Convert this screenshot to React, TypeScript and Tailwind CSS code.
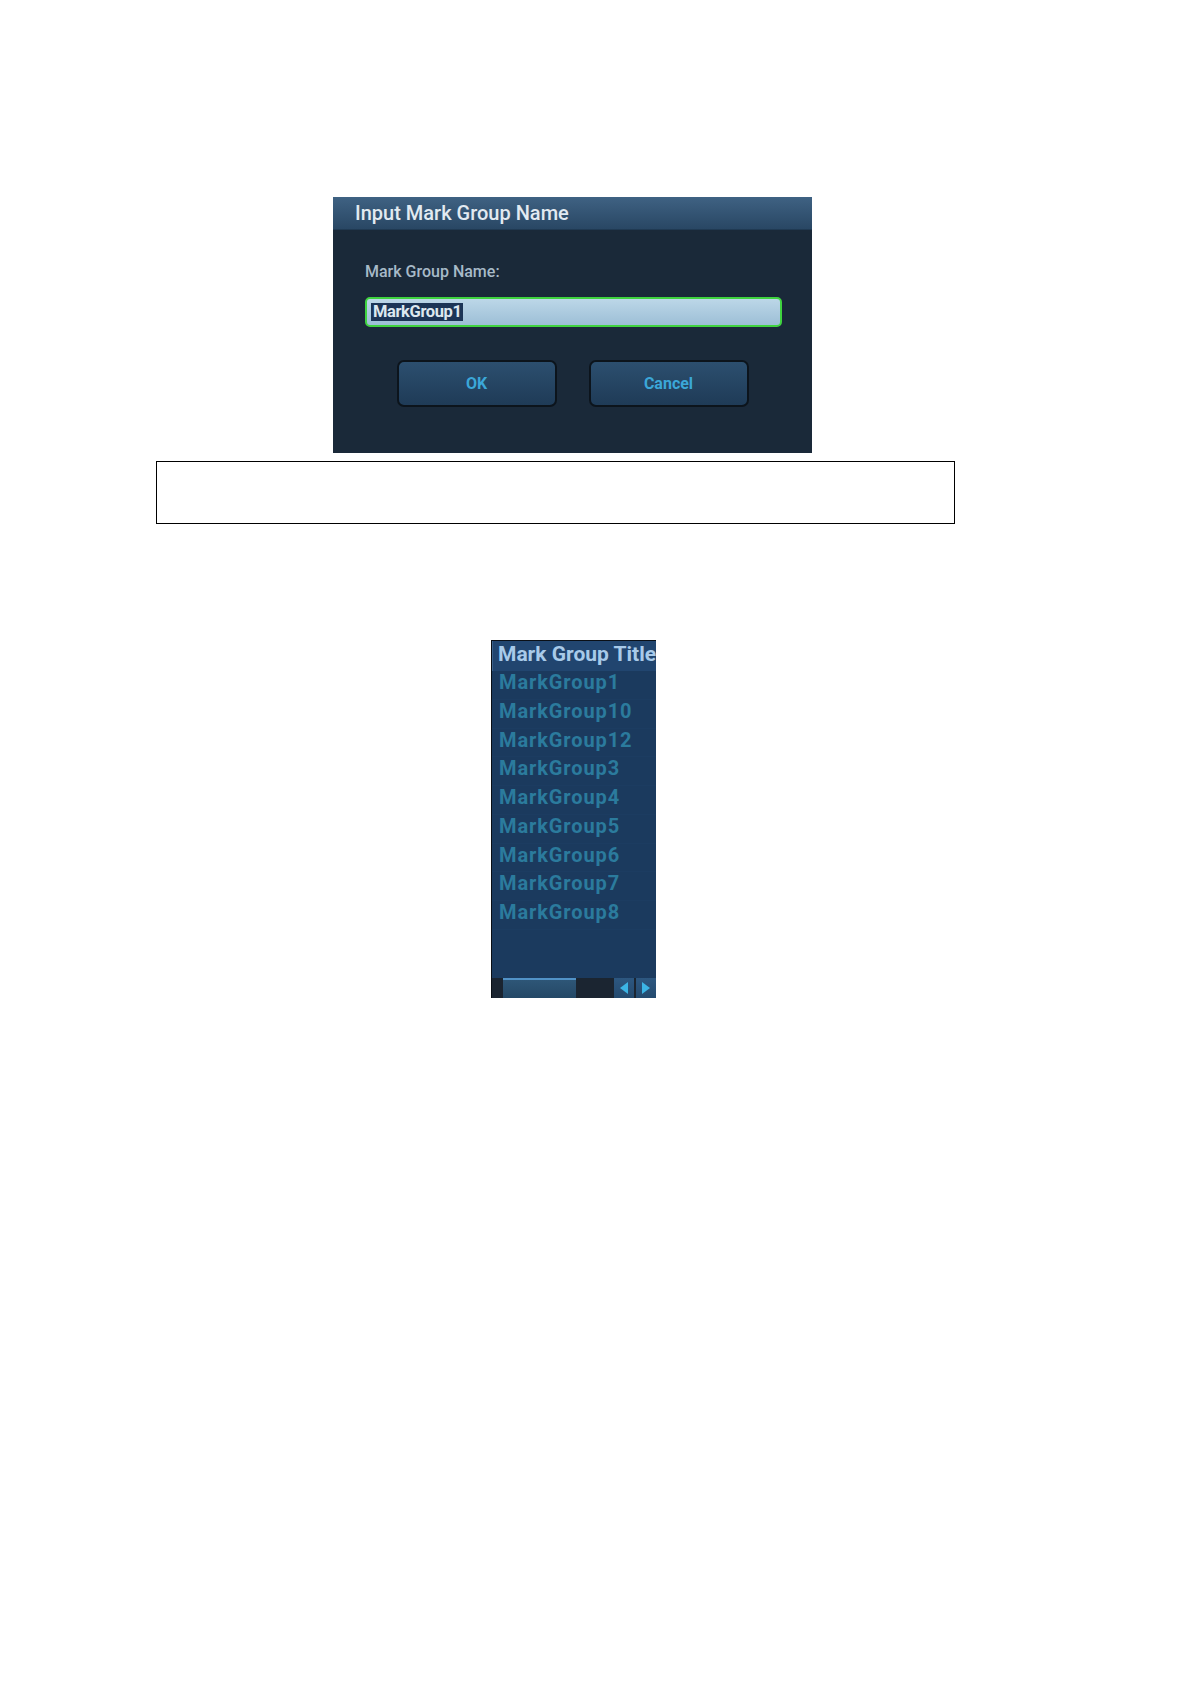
import React from 'react';

const groups = [
  'MarkGroup1',
  'MarkGroup10',
  'MarkGroup12',
  'MarkGroup3',
  'MarkGroup4',
  'MarkGroup5',
  'MarkGroup6',
  'MarkGroup7',
  'MarkGroup8',
];

function NameDialog() {
  return (
    <div className="ml-[333px] w-[479px] h-[256px] bg-[#1a2939] flex flex-col">
      <div className="h-[33px] flex items-center pl-[22px] bg-gradient-to-b from-[#3f6283] to-[#294764] border-b border-[#203a53]">
        <span className="text-[20px] leading-[20px] font-medium text-[#e2eaf1]">Input Mark Group Name</span>
      </div>

      <div className="pl-[32px] pr-[30px] pt-[32px]">
        <div className="text-[16px] leading-[20px] font-medium text-[#a7bac8]">Mark Group Name:</div>
        <div className="mt-[15px] h-[30px] rounded-[5px] border-2 border-[#3fd33f] bg-gradient-to-b from-[#bcd7e8] to-[#9dbfd6] flex items-center pl-[4px]">
          <span className="inline-block h-[18px] leading-[18px] px-[2px] bg-[#1c3556] text-[#dce8f0] text-[16.5px] font-bold tracking-[-0.4px]">
            MarkGroup1
          </span>
        </div>
      </div>

      <div className="mt-[33px] flex justify-center gap-8">
        {['OK', 'Cancel'].map((label) => (
          <button
            key={label}
            className="w-[160px] h-[47px] rounded-[7px] border-2 border-[#0c141c] bg-gradient-to-b from-[#2c4f6f] to-[#1f3b57] text-[16px] font-bold text-[#3ba7d8]"
          >
            {label}
          </button>
        ))}
      </div>
    </div>
  );
}

function GroupList() {
  return (
    <div className="ml-[491px] w-[165px] h-[358px] bg-[#1b3a5e] border-l border-t border-[#0a0f16] flex flex-col overflow-hidden">
      <div className="h-[30px] shrink-0 bg-[#21456f] border-l border-[#3b618a] pl-[5px] pt-[3px] whitespace-nowrap">
        <span className="text-[21px] leading-[20px] font-bold text-[#a8cae9]">Mark Group Title</span>
      </div>

      {groups.map((name) => (
        <div
          key={name}
          className="h-[28.75px] shrink-0 pl-[7px] border-b border-[#1c3c61] text-[20px] leading-[23px] font-bold tracking-[0.9px] text-[#2b7b9d]"
        >
          {name}
        </div>
      ))}

      <div className="flex-1" />

      {/* horizontal scrollbar */}
      <div className="h-[20px] shrink-0 flex bg-[#1a2430]">
        <div className="w-[11px]" />
        <div className="w-[73px] border-t-2 border-[#5192c7] bg-gradient-to-b from-[#2e5677] to-[#244866]" />
        <div className="w-[39px] bg-[#1b2531]" />
        <div className="w-[20px] bg-gradient-to-b from-[#2d5780] to-[#244a6e] flex items-center justify-center">
          <svg width="8" height="12" viewBox="0 0 8 12">
            <path d="M8 0 L0 6 L8 12 Z" fill="#3cb4e4" />
          </svg>
        </div>
        <div className="w-[2px] bg-[#1b2531]" />
        <div className="w-[20px] bg-gradient-to-b from-[#2d5780] to-[#244a6e] flex items-center justify-center">
          <svg width="8" height="12" viewBox="0 0 8 12">
            <path d="M0 0 L8 6 L0 12 Z" fill="#3cb4e4" />
          </svg>
        </div>
      </div>
    </div>
  );
}

export default function App() {
  return (
    <div className="w-[1191px] h-[1684px] bg-white pt-[197px] font-['Roboto','Liberation_Sans',sans-serif]">
      <NameDialog />

      <div className="ml-[156px] mt-[8px] w-[799px] h-[63px] border border-black" />

      <div className="mt-[116px]">
        <GroupList />
      </div>
    </div>
  );
}
